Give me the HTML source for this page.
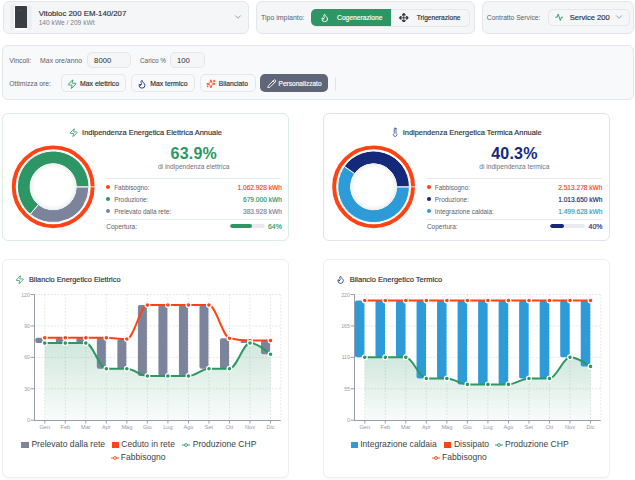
<!DOCTYPE html><html><head><meta charset="utf-8"><style>
*{box-sizing:border-box;margin:0;padding:0}
html,body{width:635px;height:480px;overflow:hidden;background:#fff;font-family:"Liberation Sans",sans-serif;color:#2b2f36}
.abs{position:absolute}
.card{position:absolute;border:1px solid #e4e6eb;border-radius:6px;background:#f5f6f8}
.ind{top:113px;width:286px;height:127px;background:#fff;border-radius:6px}
.chart{top:260px;width:286px;height:217px;background:#fff;border-color:#eef0f2}
.ind-title{position:absolute;top:128px;height:9px;font-size:6.9px;font-weight:bold;line-height:9px;white-space:nowrap;display:flex;align-items:center;gap:5px}
.pct{position:absolute;top:143px;width:80px;text-align:center;font-size:16.3px;font-weight:bold;line-height:20px}
.sub{position:absolute;top:162px;width:100px;text-align:center;font-size:6.65px;line-height:8px;color:#6b7280;white-space:nowrap}
.sep{position:absolute;width:175px;height:1px}
.dot{position:absolute;width:4.5px;height:4.5px;border-radius:50%}
.rl{position:absolute;font-size:6.4px;line-height:10px;color:#555b66;white-space:nowrap}
.rv{position:absolute;width:100px;text-align:right;font-size:6.5px;line-height:10px;white-space:nowrap;font-weight:bold}
.pbar{position:absolute;top:224.2px;width:35px;height:4.2px;border-radius:3px;background:#e8eaee;overflow:hidden}
.pbar div{height:100%;border-radius:3px}
.pv{position:absolute;top:221.5px;width:40px;text-align:right;font-size:6.9px;font-weight:bold;line-height:10px}
.lbl{position:absolute;font-size:6.85px;line-height:10px;color:#555b66;white-space:nowrap}
.btn{position:absolute;top:74px;height:18px;border:1px solid #e4e6eb;border-radius:5px;background:#f8f9fb;display:flex;align-items:center;font-size:6.3px;font-weight:bold;white-space:nowrap;color:#2b2f36}
.btn svg{position:absolute}
.inp{position:absolute;top:52px;height:16px;border:1px solid #e4e6eb;border-radius:5px;background:#f5f6f8;font-size:7.7px;line-height:14px;padding-left:6.5px;color:#2b2f36}
.leg{position:absolute;font-size:8.55px;line-height:11px;color:#3d424a;white-space:nowrap}
.sq{position:absolute;width:7.5px;height:5.5px}
svg{display:block}
.sb{font-weight:normal !important;-webkit-text-stroke-width:0.15px}
text{font-family:"Liberation Sans",sans-serif}
</style></head><body>
<div class="card" style="left:3px;top:1px;width:246px;height:33px"></div>
<div class="abs" style="left:10px;top:5px;width:22px;height:25px;background:#eceef1;border-radius:2px"></div>
<div class="abs" style="left:14.3px;top:4.7px;width:13px;height:25px;background:#fff"></div>
<div class="abs" style="left:14.9px;top:6.1px;width:12.1px;height:21.9px;background:#3a3d42;border-radius:0.5px"></div>
<div class="abs" style="left:18px;top:9.5px;width:5px;height:1.2px;background:#45484d"></div>
<div class="abs sb" style="left:38.70px;top:8px;font-size:7.82px;line-height:12px;color:#2b2f36;white-space:nowrap;">Vitobloc 200 EM-140/207</div>
<div class="abs" style="left:38.70px;top:17px;font-size:6.64px;line-height:12px;color:#7a808a;white-space:nowrap;">140 kWe / 209 kWt</div>
<div class="abs" style="left:232.5px;top:12.35px"><svg width="10" height="10" viewBox="0 0 24 24" fill="none" stroke="#7d828b" stroke-width="1.8" stroke-linecap="round" stroke-linejoin="round"><path d="m6 9 6 6 6-6"/></svg></div>
<div class="card" style="left:256px;top:1px;width:219px;height:33px"></div>
<div class="abs" style="left:261.00px;top:12px;font-size:6.97px;line-height:12px;color:#5a606b;white-space:nowrap;">Tipo impianto:</div>
<div class="abs" style="left:311px;top:8.5px;width:159px;height:18px;border:1px solid #e4e6eb;border-radius:5px;background:#f5f6f8"></div>
<div class="abs" style="left:311px;top:9px;width:80px;height:17px;border-radius:5px 0 0 5px;background:#2e9565"></div>
<div class="abs" style="left:319.9px;top:13.0px"><svg width="9.5" height="9.5" viewBox="0 0 24 24" fill="none" stroke="#fff" stroke-width="2.4" stroke-linecap="round" stroke-linejoin="round"><path d="M8.5 14.5A2.5 2.5 0 0 0 11 12c0-1.38-.5-2-1-3-1.072-2.143-.224-4.054 2-6 .5 2.5 2 4.9 4 6.5 2 1.6 3 3.5 3 5.5a7 7 0 1 1-14 0c0-1.153.433-2.294 1-3a2.5 2.5 0 0 0 2.5 2.5z"/></svg></div>
<div class="abs sb" style="left:337.10px;top:12px;font-size:6.68px;line-height:12px;color:#fff;white-space:nowrap;">Cogenerazione</div>
<div class="abs" style="left:399.4px;top:12.5px"><svg width="9.6" height="9.6" viewBox="0 0 24 24" fill="none" stroke="#2b2f36" stroke-width="2.2" stroke-linecap="round" stroke-linejoin="round"><path d="M12 2v20M2 12h20"/><path d="M15 19l-3 3-3-3M19 9l3 3-3 3M5 9l-3 3 3 3M9 5l3-3 3 3" stroke-width="3.4"/></svg></div>
<div class="abs sb" style="left:416.70px;top:12px;font-size:6.62px;line-height:12px;color:#2b2f36;white-space:nowrap;">Trigenerazione</div>
<div class="card" style="left:482px;top:1px;width:152px;height:33px"></div>
<div class="abs" style="left:486.80px;top:12px;font-size:6.7px;line-height:12px;color:#5a606b;white-space:nowrap;">Contratto Service:</div>
<div class="abs" style="left:548px;top:9px;width:82px;height:17px;border:1px solid #e4e6eb;border-radius:5px;background:#f5f6f8"></div>
<div class="abs" style="left:554.7px;top:12.7px"><svg width="8.5" height="8.5" viewBox="0 0 24 24" fill="none" stroke="#2e9565" stroke-width="2.6" stroke-linecap="round" stroke-linejoin="round"><path d="M22 12h-4l-3 9L9 3l-3 9H2"/></svg></div>
<div class="abs sb" style="left:569.80px;top:12px;font-size:7.57px;line-height:12px;color:#2b2f36;white-space:nowrap;">Service 200</div>
<div class="abs" style="left:613.75px;top:11.85px"><svg width="10" height="10" viewBox="0 0 24 24" fill="none" stroke="#7d828b" stroke-width="1.8" stroke-linecap="round" stroke-linejoin="round"><path d="m6 9 6 6 6-6"/></svg></div>
<div class="card" style="left:2px;top:45px;width:632px;height:55px;background:#f8f9fb"></div>
<div class="abs" style="left:9.25px;top:55px;font-size:6.86px;line-height:12px;color:#5a606b;white-space:nowrap;">Vincoli:</div>
<div class="abs" style="left:40.10px;top:55px;font-size:6.88px;line-height:12px;color:#5a606b;white-space:nowrap;">Max ore/anno</div>
<div class="abs" style="left:87px;top:52px;width:44px;height:16px;border:1px solid #e4e6eb;border-radius:5px;background:#f5f6f8"></div>
<div class="abs" style="left:94.10px;top:55px;font-size:7.73px;line-height:12px;color:#2b2f36;white-space:nowrap;">8000</div>
<div class="abs" style="left:140.00px;top:55px;font-size:6.4px;line-height:12px;color:#5a606b;white-space:nowrap;">Carico %</div>
<div class="abs" style="left:170px;top:52px;width:35px;height:16px;border:1px solid #e4e6eb;border-radius:5px;background:#f5f6f8"></div>
<div class="abs" style="left:176.90px;top:55px;font-size:7.73px;line-height:12px;color:#2b2f36;white-space:nowrap;">100</div>
<div class="abs" style="left:9.25px;top:78px;font-size:6.77px;line-height:12px;color:#5a606b;white-space:nowrap;">Ottimizza ore:</div>
<div class="abs" style="left:60.5px;top:74.3px;width:65px;height:17.7px;border:1px solid #e4e6eb;border-radius:5px;background:#f8f9fb"></div>
<div class="abs" style="left:66.6px;top:78.5px"><svg width="10.3" height="10.3" viewBox="0 0 24 24" fill="none" stroke="#2e9565" stroke-width="2.1" stroke-linecap="round" stroke-linejoin="round"><path d="M4 14a1 1 0 0 1-.78-1.63l9.9-10.2a.5.5 0 0 1 .86.46l-1.92 6.02A1 1 0 0 0 13 10h7a1 1 0 0 1 .78 1.63l-9.9 10.2a.5.5 0 0 1-.86-.46l1.92-6.02A1 1 0 0 0 11 14z"/></svg></div>
<div class="abs sb" style="left:79.90px;top:78px;font-size:6.93px;line-height:12px;color:#2b2f36;white-space:nowrap;">Max elettrico</div>
<div class="abs" style="left:130.5px;top:74.3px;width:64px;height:17.7px;border:1px solid #e4e6eb;border-radius:5px;background:#f8f9fb"></div>
<div class="abs" style="left:137.0px;top:79.0px"><svg width="10.0" height="10.0" viewBox="0 0 24 24" fill="none" stroke="#15297a" stroke-width="2.1" stroke-linecap="round" stroke-linejoin="round"><path d="M8.5 14.5A2.5 2.5 0 0 0 11 12c0-1.38-.5-2-1-3-1.072-2.143-.224-4.054 2-6 .5 2.5 2 4.9 4 6.5 2 1.6 3 3.5 3 5.5a7 7 0 1 1-14 0c0-1.153.433-2.294 1-3a2.5 2.5 0 0 0 2.5 2.5z"/></svg></div>
<div class="abs sb" style="left:150.20px;top:78px;font-size:6.89px;line-height:12px;color:#2b2f36;white-space:nowrap;">Max termico</div>
<div class="abs" style="left:199.5px;top:74.3px;width:56px;height:17.7px;border:1px solid #e4e6eb;border-radius:5px;background:#f8f9fb"></div>
<div class="abs" style="left:206.0px;top:78.7px"><svg width="9.8" height="9.8" viewBox="0 0 24 24" fill="none" stroke="#ff4314" stroke-width="2.2" stroke-linecap="round" stroke-linejoin="round"><path d="M9.937 15.5A2 2 0 0 0 8.5 14.063l-6.135-1.582a.5.5 0 0 1 0-.962L8.5 9.936A2 2 0 0 0 9.937 8.5l1.582-6.135a.5.5 0 0 1 .963 0L14.063 8.5A2 2 0 0 0 15.5 9.937l6.135 1.581a.5.5 0 0 1 0 .964L15.5 14.063a2 2 0 0 0-1.437 1.437l-1.582 6.135a.5.5 0 0 1-.963 0z"/><path d="M20 3v4M22 5h-4M4 17v2M5 18H3"/></svg></div>
<div class="abs sb" style="left:218.80px;top:78px;font-size:6.71px;line-height:12px;color:#2b2f36;white-space:nowrap;">Bilanciato</div>
<div class="abs" style="left:260px;top:74.3px;width:68px;height:17.7px;border-radius:5px;background:#5f6677"></div>
<div class="abs" style="left:266.6px;top:78.9px"><svg width="9.6" height="9.6" viewBox="0 0 24 24" fill="none" stroke="#fff" stroke-width="2.3" stroke-linecap="round" stroke-linejoin="round"><path d="M21.174 6.812a1 1 0 0 0-3.986-3.987L3.842 16.174a2 2 0 0 0-.5.83l-1.321 4.352a.5.5 0 0 0 .623.622l4.353-1.32a2 2 0 0 0 .83-.497z"/><path d="m15 5 4 4"/></svg></div>
<div class="abs sb" style="left:278.60px;top:78px;font-size:6.55px;line-height:12px;color:#fff;white-space:nowrap;">Personalizzato</div>
<div class="abs" style="left:335px;top:76.5px;width:1px;height:14px;background:#e1e3e8"></div>
<svg width="0" height="0" style="position:absolute"><defs><radialGradient id="inner"><stop offset="0.8" stop-color="#fff"/><stop offset="1" stop-color="#eceef0"/></radialGradient></defs></svg>
<div class="card" style="left:2px;top:113px;width:287px;height:128px;background:#fff;border-color:#dbeee4"></div>
<div class="abs" style="left:69.3px;top:128.2px"><svg width="9.4" height="9.4" viewBox="0 0 24 24" fill="none" stroke="#2e9565" stroke-width="2.0" stroke-linecap="round" stroke-linejoin="round"><path d="M4 14a1 1 0 0 1-.78-1.63l9.9-10.2a.5.5 0 0 1 .86.46l-1.92 6.02A1 1 0 0 0 13 10h7a1 1 0 0 1 .78 1.63l-9.9 10.2a.5.5 0 0 1-.86-.46l1.92-6.02A1 1 0 0 0 11 14z"/></svg></div>
<div class="abs sb" style="left:82.10px;top:127px;font-size:7.43px;line-height:12px;color:#2b2f36;white-space:nowrap;">Indipendenza Energetica Elettrica Annuale</div>
<div class="abs" style="left:143.80px;width:100px;text-align:center;top:148px;font-size:16px;line-height:12px;color:#2e9565;white-space:nowrap;font-weight:bold;letter-spacing:0.2px">63.9%</div>
<div class="abs" style="left:133.70px;width:120px;text-align:center;top:161px;font-size:6.65px;line-height:12px;color:#6b7280;white-space:nowrap;">di indipendenza elettrica</div>
<div class="abs" style="left:106px;top:177.5px;width:175px;height:1px;background:#e3efe9"></div>
<div class="abs" style="left:106.3px;top:185.2px;width:4px;height:4px;border-radius:50%;background:#ff4314"></div>
<div class="abs" style="left:114.20px;top:182px;font-size:6.4px;line-height:12px;color:#5a606b;white-space:nowrap;">Fabbisogno:</div>
<div class="abs sb" style="left:181.90px;width:100px;text-align:right;top:182px;font-size:6.6px;line-height:12px;color:#ff4314;white-space:nowrap;">1.062.928 kWh</div>
<div class="abs" style="left:106.3px;top:197.4px;width:4px;height:4px;border-radius:50%;background:#2e9565"></div>
<div class="abs" style="left:114.20px;top:194px;font-size:6.4px;line-height:12px;color:#5a606b;white-space:nowrap;">Produzione:</div>
<div class="abs sb" style="left:181.90px;width:100px;text-align:right;top:194px;font-size:6.6px;line-height:12px;color:#2e9565;white-space:nowrap;">679.000 kWh</div>
<div class="abs" style="left:106.3px;top:209.4px;width:4px;height:4px;border-radius:50%;background:#7b849b"></div>
<div class="abs" style="left:114.20px;top:206px;font-size:6.4px;line-height:12px;color:#5a606b;white-space:nowrap;">Prelevato dalla rete:</div>
<div class="abs sb" style="left:181.90px;width:100px;text-align:right;top:206px;font-size:6.6px;line-height:12px;color:#7b849b;white-space:nowrap;">383.928 kWh</div>
<div class="abs" style="left:106px;top:218.8px;width:175px;height:1px;background:#e3efe9"></div>
<div class="abs" style="left:106.30px;top:221px;font-size:6.5px;line-height:12px;color:#5a606b;white-space:nowrap;">Copertura:</div>
<div class="abs" style="left:229.5px;top:224.2px;width:35px;height:4.2px;border-radius:3px;background:#e8eaee;overflow:hidden"><div style="width:64%;height:100%;border-radius:3px;background:#2e9565"></div></div>
<div class="abs sb" style="left:241.90px;width:40px;text-align:right;top:221px;font-size:6.94px;line-height:12px;color:#2e9565;white-space:nowrap;">64%</div>
<svg width="635" height="480" style="position:absolute;left:0;top:0" viewBox="0 0 635 480">
<circle cx="53.20" cy="186.80" r="39.45" fill="none" stroke="#ff4314" stroke-width="3.9"/>
<line x1="89.20" y1="186.80" x2="95.20" y2="186.80" stroke="#fff" stroke-width="0.8"/>
<path d="M89.00,186.80 A35.80,35.80 0 0 1 30.21,214.24 L38.43,204.43 A23.00,23.00 0 0 0 76.20,186.80 Z" fill="#7b849b" stroke="#fff" stroke-width="1"/>
<path d="M30.21,214.24 A35.80,35.80 0 1 1 89.00,186.80 L76.20,186.80 A23.00,23.00 0 1 0 38.43,204.43 Z" fill="#2e9565" stroke="#fff" stroke-width="1"/>
<circle cx="53.20" cy="186.80" r="23.2" fill="url(#inner)"/>
</svg>
<div class="card" style="left:322.6px;top:113px;width:287px;height:128px;background:#fff;border-color:#dfe3f0"></div>
<div class="abs" style="left:389.7px;top:127.1px"><svg width="10.3" height="10.3" viewBox="0 0 24 24" fill="none" stroke="#24378a" stroke-width="1.7" stroke-linecap="round" stroke-linejoin="round"><path d="M14 4v10.54a4 4 0 1 1-4 0V4a2 2 0 0 1 4 0Z"/></svg></div>
<div class="abs sb" style="left:402.70px;top:127px;font-size:7.43px;line-height:12px;color:#2b2f36;white-space:nowrap;">Indipendenza Energetica Termica Annuale</div>
<div class="abs" style="left:464.40px;width:100px;text-align:center;top:148px;font-size:16px;line-height:12px;color:#15297a;white-space:nowrap;font-weight:bold;letter-spacing:0.2px">40.3%</div>
<div class="abs" style="left:454.30px;width:120px;text-align:center;top:161px;font-size:6.65px;line-height:12px;color:#6b7280;white-space:nowrap;">di indipendenza termica</div>
<div class="abs" style="left:426.6px;top:177.5px;width:175px;height:1px;background:#e6e8f0"></div>
<div class="abs" style="left:426.9px;top:185.2px;width:4px;height:4px;border-radius:50%;background:#ff4314"></div>
<div class="abs" style="left:434.80px;top:182px;font-size:6.4px;line-height:12px;color:#5a606b;white-space:nowrap;">Fabbisogno:</div>
<div class="abs sb" style="left:502.50px;width:100px;text-align:right;top:182px;font-size:6.6px;line-height:12px;color:#ff4314;white-space:nowrap;">2.513.278 kWh</div>
<div class="abs" style="left:426.9px;top:197.4px;width:4px;height:4px;border-radius:50%;background:#15297a"></div>
<div class="abs" style="left:434.80px;top:194px;font-size:6.4px;line-height:12px;color:#5a606b;white-space:nowrap;">Produzione:</div>
<div class="abs sb" style="left:502.50px;width:100px;text-align:right;top:194px;font-size:6.6px;line-height:12px;color:#15297a;white-space:nowrap;">1.013.650 kWh</div>
<div class="abs" style="left:426.9px;top:209.4px;width:4px;height:4px;border-radius:50%;background:#2d9bd8"></div>
<div class="abs" style="left:434.80px;top:206px;font-size:6.4px;line-height:12px;color:#5a606b;white-space:nowrap;">Integrazione caldaia:</div>
<div class="abs sb" style="left:502.50px;width:100px;text-align:right;top:206px;font-size:6.6px;line-height:12px;color:#2d9bd8;white-space:nowrap;">1.499.628 kWh</div>
<div class="abs" style="left:426.6px;top:218.8px;width:175px;height:1px;background:#e6e8f0"></div>
<div class="abs" style="left:426.90px;top:221px;font-size:6.5px;line-height:12px;color:#5a606b;white-space:nowrap;">Copertura:</div>
<div class="abs" style="left:550.1px;top:224.2px;width:35px;height:4.2px;border-radius:3px;background:#e8eaee;overflow:hidden"><div style="width:40%;height:100%;border-radius:3px;background:#15297a"></div></div>
<div class="abs sb" style="left:562.50px;width:40px;text-align:right;top:221px;font-size:6.94px;line-height:12px;color:#15297a;white-space:nowrap;">40%</div>
<svg width="635" height="480" style="position:absolute;left:0;top:0" viewBox="0 0 635 480">
<circle cx="373.60" cy="186.80" r="39.45" fill="none" stroke="#ff4314" stroke-width="3.9"/>
<line x1="409.60" y1="186.80" x2="415.60" y2="186.80" stroke="#fff" stroke-width="0.8"/>
<path d="M409.40,186.80 A35.80,35.80 0 1 1 344.25,166.31 L354.74,173.63 A23.00,23.00 0 1 0 396.60,186.80 Z" fill="#2d9bd8" stroke="#fff" stroke-width="1"/>
<path d="M344.25,166.31 A35.80,35.80 0 0 1 409.40,186.80 L396.60,186.80 A23.00,23.00 0 0 0 354.74,173.63 Z" fill="#15297a" stroke="#fff" stroke-width="1"/>
<circle cx="373.60" cy="186.80" r="23.2" fill="url(#inner)"/>
</svg>
<div class="card" style="left:2px;top:259px;width:287px;height:219px;background:#fff;border-color:#eceef1;box-shadow:0 0.5px 1px rgba(0,0,0,0.03)"></div>
<div class="card" style="left:323px;top:259px;width:287px;height:219px;background:#fff;border-color:#eceef1;box-shadow:0 0.5px 1px rgba(0,0,0,0.03)"></div>
<div class="abs" style="left:15.2px;top:274.7px"><svg width="9.5" height="9.5" viewBox="0 0 24 24" fill="none" stroke="#2e9565" stroke-width="2.0" stroke-linecap="round" stroke-linejoin="round"><path d="M4 14a1 1 0 0 1-.78-1.63l9.9-10.2a.5.5 0 0 1 .86.46l-1.92 6.02A1 1 0 0 0 13 10h7a1 1 0 0 1 .78 1.63l-9.9 10.2a.5.5 0 0 1-.86-.46l1.92-6.02A1 1 0 0 0 11 14z"/></svg></div>
<div class="abs sb" style="left:28.90px;top:274px;font-size:7.36px;line-height:12px;color:#2b2f36;white-space:nowrap;">Bilancio Energetico Elettrico</div>
<div class="abs" style="left:336.0px;top:275.0px"><svg width="9.2" height="9.2" viewBox="0 0 24 24" fill="none" stroke="#15297a" stroke-width="2.1" stroke-linecap="round" stroke-linejoin="round"><path d="M8.5 14.5A2.5 2.5 0 0 0 11 12c0-1.38-.5-2-1-3-1.072-2.143-.224-4.054 2-6 .5 2.5 2 4.9 4 6.5 2 1.6 3 3.5 3 5.5a7 7 0 1 1-14 0c0-1.153.433-2.294 1-3a2.5 2.5 0 0 0 2.5 2.5z"/></svg></div>
<div class="abs sb" style="left:349.70px;top:274px;font-size:7.5px;line-height:12px;color:#2b2f36;white-space:nowrap;">Bilancio Energetico Termico</div>
<svg width="635" height="480" style="position:absolute;left:0px;top:0" viewBox="0 0 635 480">
<defs><linearGradient id="ag0" x1="0" y1="0" x2="0" y2="1"><stop offset="0" stop-color="#2e9565" stop-opacity="0.22"/><stop offset="1" stop-color="#2e9565" stop-opacity="0.03"/></linearGradient></defs>
<line x1="34.50" y1="388.77" x2="280.80" y2="388.77" stroke="#dfe2e8" stroke-width="0.9" stroke-dasharray="1.6 1.7"/>
<line x1="34.50" y1="357.35" x2="280.80" y2="357.35" stroke="#dfe2e8" stroke-width="0.9" stroke-dasharray="1.6 1.7"/>
<line x1="34.50" y1="325.93" x2="280.80" y2="325.93" stroke="#dfe2e8" stroke-width="0.9" stroke-dasharray="1.6 1.7"/>
<line x1="34.50" y1="294.50" x2="280.80" y2="294.50" stroke="#dfe2e8" stroke-width="0.9" stroke-dasharray="1.6 1.7"/>
<line x1="44.76" y1="294.50" x2="44.76" y2="420.20" stroke="#dfe2e8" stroke-width="0.9" stroke-dasharray="1.6 1.7"/>
<line x1="65.29" y1="294.50" x2="65.29" y2="420.20" stroke="#dfe2e8" stroke-width="0.9" stroke-dasharray="1.6 1.7"/>
<line x1="85.81" y1="294.50" x2="85.81" y2="420.20" stroke="#dfe2e8" stroke-width="0.9" stroke-dasharray="1.6 1.7"/>
<line x1="106.34" y1="294.50" x2="106.34" y2="420.20" stroke="#dfe2e8" stroke-width="0.9" stroke-dasharray="1.6 1.7"/>
<line x1="126.86" y1="294.50" x2="126.86" y2="420.20" stroke="#dfe2e8" stroke-width="0.9" stroke-dasharray="1.6 1.7"/>
<line x1="147.39" y1="294.50" x2="147.39" y2="420.20" stroke="#dfe2e8" stroke-width="0.9" stroke-dasharray="1.6 1.7"/>
<line x1="167.91" y1="294.50" x2="167.91" y2="420.20" stroke="#dfe2e8" stroke-width="0.9" stroke-dasharray="1.6 1.7"/>
<line x1="188.44" y1="294.50" x2="188.44" y2="420.20" stroke="#dfe2e8" stroke-width="0.9" stroke-dasharray="1.6 1.7"/>
<line x1="208.96" y1="294.50" x2="208.96" y2="420.20" stroke="#dfe2e8" stroke-width="0.9" stroke-dasharray="1.6 1.7"/>
<line x1="229.49" y1="294.50" x2="229.49" y2="420.20" stroke="#dfe2e8" stroke-width="0.9" stroke-dasharray="1.6 1.7"/>
<line x1="250.01" y1="294.50" x2="250.01" y2="420.20" stroke="#dfe2e8" stroke-width="0.9" stroke-dasharray="1.6 1.7"/>
<line x1="270.54" y1="294.50" x2="270.54" y2="420.20" stroke="#dfe2e8" stroke-width="0.9" stroke-dasharray="1.6 1.7"/>
<line x1="280.80" y1="294.50" x2="280.80" y2="420.20" stroke="#dfe2e8" stroke-width="0.9" stroke-dasharray="1.6 1.7"/>
<path d="M44.76,343.10 C51.60,343.10 58.45,343.10 65.29,343.10 C72.13,343.10 78.97,343.10 85.81,343.10 C92.65,343.10 99.50,368.77 106.34,368.77 C113.18,368.77 120.02,368.77 126.86,368.77 C133.70,368.77 140.55,376.00 147.39,376.00 C154.23,376.00 161.07,376.00 167.91,376.00 C174.75,376.00 181.60,376.00 188.44,376.00 C195.28,376.00 202.12,368.77 208.96,368.77 C215.80,368.77 222.65,368.77 229.49,368.77 C236.33,368.77 243.17,343.10 250.01,343.10 C256.85,343.10 263.70,348.66 270.54,354.21 L270.54,420.20 L44.76,420.20 Z" fill="url(#ag0)"/>
<line x1="34.50" y1="294.50" x2="34.50" y2="421.00" stroke="#999da5" stroke-width="1"/>
<line x1="34.00" y1="420.50" x2="280.80" y2="420.50" stroke="#999da5" stroke-width="1"/>
<rect x="35.26" y="337.87" width="9.00" height="5.24" rx="2.00" fill="#7b849b"/>
<rect x="55.79" y="337.87" width="9.00" height="5.24" rx="2.00" fill="#7b849b"/>
<rect x="76.31" y="337.87" width="9.00" height="5.24" rx="2.00" fill="#7b849b"/>
<rect x="96.84" y="337.87" width="9.00" height="30.90" rx="2.00" fill="#7b849b"/>
<rect x="117.36" y="339.02" width="9.00" height="29.75" rx="2.00" fill="#7b849b"/>
<rect x="137.89" y="304.98" width="9.00" height="71.02" rx="2.00" fill="#7b849b"/>
<rect x="158.41" y="304.98" width="9.00" height="71.02" rx="2.00" fill="#7b849b"/>
<rect x="178.94" y="304.98" width="9.00" height="71.02" rx="2.00" fill="#7b849b"/>
<rect x="199.46" y="304.98" width="9.00" height="63.79" rx="2.00" fill="#7b849b"/>
<rect x="219.99" y="338.29" width="9.00" height="30.48" rx="2.00" fill="#7b849b"/>
<rect x="240.51" y="340.59" width="9.00" height="2.51" rx="1.26" fill="#7b849b"/>
<rect x="261.04" y="340.59" width="9.00" height="13.62" rx="2.00" fill="#7b849b"/>
<line x1="30.50" y1="420.20" x2="34.50" y2="420.20" stroke="#999da5" stroke-width="1"/>
<text x="29.70" y="420.20" font-size="5.0" fill="#959aa2" text-anchor="end" dominant-baseline="central">0</text>
<line x1="30.50" y1="388.77" x2="34.50" y2="388.77" stroke="#999da5" stroke-width="1"/>
<text x="29.70" y="388.77" font-size="5.0" fill="#959aa2" text-anchor="end" dominant-baseline="central">30</text>
<line x1="30.50" y1="357.35" x2="34.50" y2="357.35" stroke="#999da5" stroke-width="1"/>
<text x="29.70" y="357.35" font-size="5.0" fill="#959aa2" text-anchor="end" dominant-baseline="central">60</text>
<line x1="30.50" y1="325.93" x2="34.50" y2="325.93" stroke="#999da5" stroke-width="1"/>
<text x="29.70" y="325.93" font-size="5.0" fill="#959aa2" text-anchor="end" dominant-baseline="central">90</text>
<line x1="30.50" y1="294.50" x2="34.50" y2="294.50" stroke="#999da5" stroke-width="1"/>
<text x="29.70" y="294.50" font-size="5.0" fill="#959aa2" text-anchor="end" dominant-baseline="central">120</text>
<line x1="44.76" y1="420.50" x2="44.76" y2="423.50" stroke="#999da5" stroke-width="1"/>
<text x="44.76" y="426.90" font-size="5.6" fill="#959aa2" text-anchor="middle" dominant-baseline="central">Gen</text>
<line x1="65.29" y1="420.50" x2="65.29" y2="423.50" stroke="#999da5" stroke-width="1"/>
<text x="65.29" y="426.90" font-size="5.6" fill="#959aa2" text-anchor="middle" dominant-baseline="central">Feb</text>
<line x1="85.81" y1="420.50" x2="85.81" y2="423.50" stroke="#999da5" stroke-width="1"/>
<text x="85.81" y="426.90" font-size="5.6" fill="#959aa2" text-anchor="middle" dominant-baseline="central">Mar</text>
<line x1="106.34" y1="420.50" x2="106.34" y2="423.50" stroke="#999da5" stroke-width="1"/>
<text x="106.34" y="426.90" font-size="5.6" fill="#959aa2" text-anchor="middle" dominant-baseline="central">Apr</text>
<line x1="126.86" y1="420.50" x2="126.86" y2="423.50" stroke="#999da5" stroke-width="1"/>
<text x="126.86" y="426.90" font-size="5.6" fill="#959aa2" text-anchor="middle" dominant-baseline="central">Mag</text>
<line x1="147.39" y1="420.50" x2="147.39" y2="423.50" stroke="#999da5" stroke-width="1"/>
<text x="147.39" y="426.90" font-size="5.6" fill="#959aa2" text-anchor="middle" dominant-baseline="central">Giu</text>
<line x1="167.91" y1="420.50" x2="167.91" y2="423.50" stroke="#999da5" stroke-width="1"/>
<text x="167.91" y="426.90" font-size="5.6" fill="#959aa2" text-anchor="middle" dominant-baseline="central">Lug</text>
<line x1="188.44" y1="420.50" x2="188.44" y2="423.50" stroke="#999da5" stroke-width="1"/>
<text x="188.44" y="426.90" font-size="5.6" fill="#959aa2" text-anchor="middle" dominant-baseline="central">Ago</text>
<line x1="208.96" y1="420.50" x2="208.96" y2="423.50" stroke="#999da5" stroke-width="1"/>
<text x="208.96" y="426.90" font-size="5.6" fill="#959aa2" text-anchor="middle" dominant-baseline="central">Set</text>
<line x1="229.49" y1="420.50" x2="229.49" y2="423.50" stroke="#999da5" stroke-width="1"/>
<text x="229.49" y="426.90" font-size="5.6" fill="#959aa2" text-anchor="middle" dominant-baseline="central">Ott</text>
<line x1="250.01" y1="420.50" x2="250.01" y2="423.50" stroke="#999da5" stroke-width="1"/>
<text x="250.01" y="426.90" font-size="5.6" fill="#959aa2" text-anchor="middle" dominant-baseline="central">Nov</text>
<line x1="270.54" y1="420.50" x2="270.54" y2="423.50" stroke="#999da5" stroke-width="1"/>
<text x="270.54" y="426.90" font-size="5.6" fill="#959aa2" text-anchor="middle" dominant-baseline="central">Dic</text>
<path d="M44.76,337.87 C51.60,337.87 58.45,337.87 65.29,337.87 C72.13,337.87 78.97,337.87 85.81,337.87 C92.65,337.87 99.50,337.87 106.34,337.87 C113.18,337.87 120.02,339.02 126.86,339.02 C133.70,339.02 140.55,304.98 147.39,304.98 C154.23,304.98 161.07,304.98 167.91,304.98 C174.75,304.98 181.60,304.98 188.44,304.98 C195.28,304.98 202.12,304.98 208.96,304.98 C215.80,304.98 222.65,336.75 229.49,338.29 C236.33,339.82 243.17,340.59 250.01,340.59 C256.85,340.59 263.70,340.59 270.54,340.59" fill="none" stroke="#ff4314" stroke-width="2"/>
<path d="M44.76,343.10 C51.60,343.10 58.45,343.10 65.29,343.10 C72.13,343.10 78.97,343.10 85.81,343.10 C92.65,343.10 99.50,368.77 106.34,368.77 C113.18,368.77 120.02,368.77 126.86,368.77 C133.70,368.77 140.55,376.00 147.39,376.00 C154.23,376.00 161.07,376.00 167.91,376.00 C174.75,376.00 181.60,376.00 188.44,376.00 C195.28,376.00 202.12,368.77 208.96,368.77 C215.80,368.77 222.65,368.77 229.49,368.77 C236.33,368.77 243.17,343.10 250.01,343.10 C256.85,343.10 263.70,348.66 270.54,354.21" fill="none" stroke="#2e9565" stroke-width="2"/>
<circle cx="44.76" cy="337.87" r="2.4" fill="#ff4314" stroke="#fff" stroke-width="1.2"/>
<circle cx="65.29" cy="337.87" r="2.4" fill="#ff4314" stroke="#fff" stroke-width="1.2"/>
<circle cx="85.81" cy="337.87" r="2.4" fill="#ff4314" stroke="#fff" stroke-width="1.2"/>
<circle cx="106.34" cy="337.87" r="2.4" fill="#ff4314" stroke="#fff" stroke-width="1.2"/>
<circle cx="126.86" cy="339.02" r="2.4" fill="#ff4314" stroke="#fff" stroke-width="1.2"/>
<circle cx="147.39" cy="304.98" r="2.4" fill="#ff4314" stroke="#fff" stroke-width="1.2"/>
<circle cx="167.91" cy="304.98" r="2.4" fill="#ff4314" stroke="#fff" stroke-width="1.2"/>
<circle cx="188.44" cy="304.98" r="2.4" fill="#ff4314" stroke="#fff" stroke-width="1.2"/>
<circle cx="208.96" cy="304.98" r="2.4" fill="#ff4314" stroke="#fff" stroke-width="1.2"/>
<circle cx="229.49" cy="338.29" r="2.4" fill="#ff4314" stroke="#fff" stroke-width="1.2"/>
<circle cx="250.01" cy="340.59" r="2.4" fill="#ff4314" stroke="#fff" stroke-width="1.2"/>
<circle cx="270.54" cy="340.59" r="2.4" fill="#ff4314" stroke="#fff" stroke-width="1.2"/>
<circle cx="44.76" cy="343.10" r="2.4" fill="#2e9565" stroke="#fff" stroke-width="1.2"/>
<circle cx="65.29" cy="343.10" r="2.4" fill="#2e9565" stroke="#fff" stroke-width="1.2"/>
<circle cx="85.81" cy="343.10" r="2.4" fill="#2e9565" stroke="#fff" stroke-width="1.2"/>
<circle cx="106.34" cy="368.77" r="2.4" fill="#2e9565" stroke="#fff" stroke-width="1.2"/>
<circle cx="126.86" cy="368.77" r="2.4" fill="#2e9565" stroke="#fff" stroke-width="1.2"/>
<circle cx="147.39" cy="376.00" r="2.4" fill="#2e9565" stroke="#fff" stroke-width="1.2"/>
<circle cx="167.91" cy="376.00" r="2.4" fill="#2e9565" stroke="#fff" stroke-width="1.2"/>
<circle cx="188.44" cy="376.00" r="2.4" fill="#2e9565" stroke="#fff" stroke-width="1.2"/>
<circle cx="208.96" cy="368.77" r="2.4" fill="#2e9565" stroke="#fff" stroke-width="1.2"/>
<circle cx="229.49" cy="368.77" r="2.4" fill="#2e9565" stroke="#fff" stroke-width="1.2"/>
<circle cx="250.01" cy="343.10" r="2.4" fill="#2e9565" stroke="#fff" stroke-width="1.2"/>
<circle cx="270.54" cy="354.21" r="2.4" fill="#2e9565" stroke="#fff" stroke-width="1.2"/>
</svg>
<svg width="635" height="480" style="position:absolute;left:320.4px;top:0" viewBox="0 0 635 480">
<defs><linearGradient id="ag320" x1="0" y1="0" x2="0" y2="1"><stop offset="0" stop-color="#2e9565" stop-opacity="0.22"/><stop offset="1" stop-color="#2e9565" stop-opacity="0.03"/></linearGradient></defs>
<line x1="34.50" y1="388.77" x2="280.80" y2="388.77" stroke="#dfe2e8" stroke-width="0.9" stroke-dasharray="1.6 1.7"/>
<line x1="34.50" y1="357.35" x2="280.80" y2="357.35" stroke="#dfe2e8" stroke-width="0.9" stroke-dasharray="1.6 1.7"/>
<line x1="34.50" y1="325.93" x2="280.80" y2="325.93" stroke="#dfe2e8" stroke-width="0.9" stroke-dasharray="1.6 1.7"/>
<line x1="34.50" y1="294.50" x2="280.80" y2="294.50" stroke="#dfe2e8" stroke-width="0.9" stroke-dasharray="1.6 1.7"/>
<line x1="44.76" y1="294.50" x2="44.76" y2="420.20" stroke="#dfe2e8" stroke-width="0.9" stroke-dasharray="1.6 1.7"/>
<line x1="65.29" y1="294.50" x2="65.29" y2="420.20" stroke="#dfe2e8" stroke-width="0.9" stroke-dasharray="1.6 1.7"/>
<line x1="85.81" y1="294.50" x2="85.81" y2="420.20" stroke="#dfe2e8" stroke-width="0.9" stroke-dasharray="1.6 1.7"/>
<line x1="106.34" y1="294.50" x2="106.34" y2="420.20" stroke="#dfe2e8" stroke-width="0.9" stroke-dasharray="1.6 1.7"/>
<line x1="126.86" y1="294.50" x2="126.86" y2="420.20" stroke="#dfe2e8" stroke-width="0.9" stroke-dasharray="1.6 1.7"/>
<line x1="147.39" y1="294.50" x2="147.39" y2="420.20" stroke="#dfe2e8" stroke-width="0.9" stroke-dasharray="1.6 1.7"/>
<line x1="167.91" y1="294.50" x2="167.91" y2="420.20" stroke="#dfe2e8" stroke-width="0.9" stroke-dasharray="1.6 1.7"/>
<line x1="188.44" y1="294.50" x2="188.44" y2="420.20" stroke="#dfe2e8" stroke-width="0.9" stroke-dasharray="1.6 1.7"/>
<line x1="208.96" y1="294.50" x2="208.96" y2="420.20" stroke="#dfe2e8" stroke-width="0.9" stroke-dasharray="1.6 1.7"/>
<line x1="229.49" y1="294.50" x2="229.49" y2="420.20" stroke="#dfe2e8" stroke-width="0.9" stroke-dasharray="1.6 1.7"/>
<line x1="250.01" y1="294.50" x2="250.01" y2="420.20" stroke="#dfe2e8" stroke-width="0.9" stroke-dasharray="1.6 1.7"/>
<line x1="270.54" y1="294.50" x2="270.54" y2="420.20" stroke="#dfe2e8" stroke-width="0.9" stroke-dasharray="1.6 1.7"/>
<line x1="280.80" y1="294.50" x2="280.80" y2="420.20" stroke="#dfe2e8" stroke-width="0.9" stroke-dasharray="1.6 1.7"/>
<path d="M44.76,357.35 C51.60,357.35 58.45,357.35 65.29,357.35 C72.13,357.35 78.97,357.35 85.81,357.35 C92.65,357.35 99.50,378.49 106.34,378.49 C113.18,378.49 120.02,378.49 126.86,378.49 C133.70,378.49 140.55,384.38 147.39,384.38 C154.23,384.38 161.07,384.38 167.91,384.38 C174.75,384.38 181.60,384.38 188.44,384.38 C195.28,384.38 202.12,378.49 208.96,378.49 C215.80,378.49 222.65,378.49 229.49,378.49 C236.33,378.49 243.17,357.35 250.01,357.35 C256.85,357.35 263.70,361.86 270.54,366.38 L270.54,420.20 L44.76,420.20 Z" fill="url(#ag320)"/>
<line x1="34.50" y1="294.50" x2="34.50" y2="421.00" stroke="#999da5" stroke-width="1"/>
<line x1="34.00" y1="420.50" x2="280.80" y2="420.50" stroke="#999da5" stroke-width="1"/>
<rect x="34.96" y="300.56" width="9.50" height="56.79" rx="2.00" fill="#2d9bd8"/>
<rect x="55.49" y="300.56" width="9.50" height="56.79" rx="2.00" fill="#2d9bd8"/>
<rect x="76.01" y="300.56" width="9.50" height="56.79" rx="2.00" fill="#2d9bd8"/>
<rect x="96.54" y="300.56" width="9.50" height="77.93" rx="2.00" fill="#2d9bd8"/>
<rect x="117.06" y="300.56" width="9.50" height="77.93" rx="2.00" fill="#2d9bd8"/>
<rect x="137.59" y="300.56" width="9.50" height="83.82" rx="2.00" fill="#2d9bd8"/>
<rect x="158.11" y="300.56" width="9.50" height="83.82" rx="2.00" fill="#2d9bd8"/>
<rect x="178.64" y="300.56" width="9.50" height="83.82" rx="2.00" fill="#2d9bd8"/>
<rect x="199.16" y="300.56" width="9.50" height="77.93" rx="2.00" fill="#2d9bd8"/>
<rect x="219.69" y="300.56" width="9.50" height="77.93" rx="2.00" fill="#2d9bd8"/>
<rect x="240.21" y="300.56" width="9.50" height="56.79" rx="2.00" fill="#2d9bd8"/>
<rect x="260.74" y="300.56" width="9.50" height="65.82" rx="2.00" fill="#2d9bd8"/>
<line x1="30.50" y1="420.20" x2="34.50" y2="420.20" stroke="#999da5" stroke-width="1"/>
<text x="29.70" y="420.20" font-size="5.0" fill="#959aa2" text-anchor="end" dominant-baseline="central">0</text>
<line x1="30.50" y1="388.77" x2="34.50" y2="388.77" stroke="#999da5" stroke-width="1"/>
<text x="29.70" y="388.77" font-size="5.0" fill="#959aa2" text-anchor="end" dominant-baseline="central">55</text>
<line x1="30.50" y1="357.35" x2="34.50" y2="357.35" stroke="#999da5" stroke-width="1"/>
<text x="29.70" y="357.35" font-size="5.0" fill="#959aa2" text-anchor="end" dominant-baseline="central">110</text>
<line x1="30.50" y1="325.93" x2="34.50" y2="325.93" stroke="#999da5" stroke-width="1"/>
<text x="29.70" y="325.93" font-size="5.0" fill="#959aa2" text-anchor="end" dominant-baseline="central">165</text>
<line x1="30.50" y1="294.50" x2="34.50" y2="294.50" stroke="#999da5" stroke-width="1"/>
<text x="29.70" y="294.50" font-size="5.0" fill="#959aa2" text-anchor="end" dominant-baseline="central">220</text>
<line x1="44.76" y1="420.50" x2="44.76" y2="423.50" stroke="#999da5" stroke-width="1"/>
<text x="44.76" y="426.90" font-size="5.6" fill="#959aa2" text-anchor="middle" dominant-baseline="central">Gen</text>
<line x1="65.29" y1="420.50" x2="65.29" y2="423.50" stroke="#999da5" stroke-width="1"/>
<text x="65.29" y="426.90" font-size="5.6" fill="#959aa2" text-anchor="middle" dominant-baseline="central">Feb</text>
<line x1="85.81" y1="420.50" x2="85.81" y2="423.50" stroke="#999da5" stroke-width="1"/>
<text x="85.81" y="426.90" font-size="5.6" fill="#959aa2" text-anchor="middle" dominant-baseline="central">Mar</text>
<line x1="106.34" y1="420.50" x2="106.34" y2="423.50" stroke="#999da5" stroke-width="1"/>
<text x="106.34" y="426.90" font-size="5.6" fill="#959aa2" text-anchor="middle" dominant-baseline="central">Apr</text>
<line x1="126.86" y1="420.50" x2="126.86" y2="423.50" stroke="#999da5" stroke-width="1"/>
<text x="126.86" y="426.90" font-size="5.6" fill="#959aa2" text-anchor="middle" dominant-baseline="central">Mag</text>
<line x1="147.39" y1="420.50" x2="147.39" y2="423.50" stroke="#999da5" stroke-width="1"/>
<text x="147.39" y="426.90" font-size="5.6" fill="#959aa2" text-anchor="middle" dominant-baseline="central">Giu</text>
<line x1="167.91" y1="420.50" x2="167.91" y2="423.50" stroke="#999da5" stroke-width="1"/>
<text x="167.91" y="426.90" font-size="5.6" fill="#959aa2" text-anchor="middle" dominant-baseline="central">Lug</text>
<line x1="188.44" y1="420.50" x2="188.44" y2="423.50" stroke="#999da5" stroke-width="1"/>
<text x="188.44" y="426.90" font-size="5.6" fill="#959aa2" text-anchor="middle" dominant-baseline="central">Ago</text>
<line x1="208.96" y1="420.50" x2="208.96" y2="423.50" stroke="#999da5" stroke-width="1"/>
<text x="208.96" y="426.90" font-size="5.6" fill="#959aa2" text-anchor="middle" dominant-baseline="central">Set</text>
<line x1="229.49" y1="420.50" x2="229.49" y2="423.50" stroke="#999da5" stroke-width="1"/>
<text x="229.49" y="426.90" font-size="5.6" fill="#959aa2" text-anchor="middle" dominant-baseline="central">Ott</text>
<line x1="250.01" y1="420.50" x2="250.01" y2="423.50" stroke="#999da5" stroke-width="1"/>
<text x="250.01" y="426.90" font-size="5.6" fill="#959aa2" text-anchor="middle" dominant-baseline="central">Nov</text>
<line x1="270.54" y1="420.50" x2="270.54" y2="423.50" stroke="#999da5" stroke-width="1"/>
<text x="270.54" y="426.90" font-size="5.6" fill="#959aa2" text-anchor="middle" dominant-baseline="central">Dic</text>
<path d="M44.76,300.56 C51.60,300.56 58.45,300.56 65.29,300.56 C72.13,300.56 78.97,300.56 85.81,300.56 C92.65,300.56 99.50,300.56 106.34,300.56 C113.18,300.56 120.02,300.56 126.86,300.56 C133.70,300.56 140.55,300.56 147.39,300.56 C154.23,300.56 161.07,300.56 167.91,300.56 C174.75,300.56 181.60,300.56 188.44,300.56 C195.28,300.56 202.12,300.56 208.96,300.56 C215.80,300.56 222.65,300.56 229.49,300.56 C236.33,300.56 243.17,300.56 250.01,300.56 C256.85,300.56 263.70,300.56 270.54,300.56" fill="none" stroke="#ff4314" stroke-width="2"/>
<path d="M44.76,357.35 C51.60,357.35 58.45,357.35 65.29,357.35 C72.13,357.35 78.97,357.35 85.81,357.35 C92.65,357.35 99.50,378.49 106.34,378.49 C113.18,378.49 120.02,378.49 126.86,378.49 C133.70,378.49 140.55,384.38 147.39,384.38 C154.23,384.38 161.07,384.38 167.91,384.38 C174.75,384.38 181.60,384.38 188.44,384.38 C195.28,384.38 202.12,378.49 208.96,378.49 C215.80,378.49 222.65,378.49 229.49,378.49 C236.33,378.49 243.17,357.35 250.01,357.35 C256.85,357.35 263.70,361.86 270.54,366.38" fill="none" stroke="#2e9565" stroke-width="2"/>
<circle cx="44.76" cy="300.56" r="2.4" fill="#ff4314" stroke="#fff" stroke-width="1.2"/>
<circle cx="65.29" cy="300.56" r="2.4" fill="#ff4314" stroke="#fff" stroke-width="1.2"/>
<circle cx="85.81" cy="300.56" r="2.4" fill="#ff4314" stroke="#fff" stroke-width="1.2"/>
<circle cx="106.34" cy="300.56" r="2.4" fill="#ff4314" stroke="#fff" stroke-width="1.2"/>
<circle cx="126.86" cy="300.56" r="2.4" fill="#ff4314" stroke="#fff" stroke-width="1.2"/>
<circle cx="147.39" cy="300.56" r="2.4" fill="#ff4314" stroke="#fff" stroke-width="1.2"/>
<circle cx="167.91" cy="300.56" r="2.4" fill="#ff4314" stroke="#fff" stroke-width="1.2"/>
<circle cx="188.44" cy="300.56" r="2.4" fill="#ff4314" stroke="#fff" stroke-width="1.2"/>
<circle cx="208.96" cy="300.56" r="2.4" fill="#ff4314" stroke="#fff" stroke-width="1.2"/>
<circle cx="229.49" cy="300.56" r="2.4" fill="#ff4314" stroke="#fff" stroke-width="1.2"/>
<circle cx="250.01" cy="300.56" r="2.4" fill="#ff4314" stroke="#fff" stroke-width="1.2"/>
<circle cx="270.54" cy="300.56" r="2.4" fill="#ff4314" stroke="#fff" stroke-width="1.2"/>
<circle cx="44.76" cy="357.35" r="2.4" fill="#2e9565" stroke="#fff" stroke-width="1.2"/>
<circle cx="65.29" cy="357.35" r="2.4" fill="#2e9565" stroke="#fff" stroke-width="1.2"/>
<circle cx="85.81" cy="357.35" r="2.4" fill="#2e9565" stroke="#fff" stroke-width="1.2"/>
<circle cx="106.34" cy="378.49" r="2.4" fill="#2e9565" stroke="#fff" stroke-width="1.2"/>
<circle cx="126.86" cy="378.49" r="2.4" fill="#2e9565" stroke="#fff" stroke-width="1.2"/>
<circle cx="147.39" cy="384.38" r="2.4" fill="#2e9565" stroke="#fff" stroke-width="1.2"/>
<circle cx="167.91" cy="384.38" r="2.4" fill="#2e9565" stroke="#fff" stroke-width="1.2"/>
<circle cx="188.44" cy="384.38" r="2.4" fill="#2e9565" stroke="#fff" stroke-width="1.2"/>
<circle cx="208.96" cy="378.49" r="2.4" fill="#2e9565" stroke="#fff" stroke-width="1.2"/>
<circle cx="229.49" cy="378.49" r="2.4" fill="#2e9565" stroke="#fff" stroke-width="1.2"/>
<circle cx="250.01" cy="357.35" r="2.4" fill="#2e9565" stroke="#fff" stroke-width="1.2"/>
<circle cx="270.54" cy="366.38" r="2.4" fill="#2e9565" stroke="#fff" stroke-width="1.2"/>
</svg>
<div class="abs" style="left:21.3px;top:442.3px;width:7.5px;height:5.5px;background:#7b849b"></div>
<div class="abs" style="left:31.40px;top:438px;font-size:8.55px;line-height:12px;color:#3c3f44;white-space:nowrap;">Prelevato dalla rete</div>
<div class="abs" style="left:111.5px;top:442.3px;width:7.5px;height:5.5px;background:#ff4314"></div>
<div class="abs" style="left:121.30px;top:438px;font-size:8.55px;line-height:12px;color:#3c3f44;white-space:nowrap;">Ceduto in rete</div>
<div class="abs" style="left:182.3px;top:441.5px"><svg width="8" height="6" viewBox="0 0 8 6"><line x1="0" y1="3" x2="8" y2="3" stroke="#2e9565" stroke-width="0.9"/><circle cx="4" cy="3" r="1.45" fill="#fff" stroke="#2e9565" stroke-width="0.9"/></svg></div>
<div class="abs" style="left:192.70px;top:438px;font-size:8.55px;line-height:12px;color:#3c3f44;white-space:nowrap;">Produzione CHP</div>
<div class="abs" style="left:111px;top:454.7px"><svg width="8" height="6" viewBox="0 0 8 6"><line x1="0" y1="3" x2="8" y2="3" stroke="#ff4314" stroke-width="0.9"/><circle cx="4" cy="3" r="1.45" fill="#fff" stroke="#ff4314" stroke-width="0.9"/></svg></div>
<div class="abs" style="left:120.80px;top:451px;font-size:8.55px;line-height:12px;color:#3c3f44;white-space:nowrap;">Fabbisogno</div>
<div class="abs" style="left:350.6px;top:442.3px;width:7.5px;height:5.5px;background:#2d9bd8"></div>
<div class="abs" style="left:360.20px;top:438px;font-size:8.55px;line-height:12px;color:#3c3f44;white-space:nowrap;">Integrazione caldaia</div>
<div class="abs" style="left:443.8px;top:442.3px;width:7.5px;height:5.5px;background:#ff4314"></div>
<div class="abs" style="left:453.90px;top:438px;font-size:8.55px;line-height:12px;color:#3c3f44;white-space:nowrap;">Dissipato</div>
<div class="abs" style="left:495px;top:441.5px"><svg width="8" height="6" viewBox="0 0 8 6"><line x1="0" y1="3" x2="8" y2="3" stroke="#2e9565" stroke-width="0.9"/><circle cx="4" cy="3" r="1.45" fill="#fff" stroke="#2e9565" stroke-width="0.9"/></svg></div>
<div class="abs" style="left:505.00px;top:438px;font-size:8.55px;line-height:12px;color:#3c3f44;white-space:nowrap;">Produzione CHP</div>
<div class="abs" style="left:431.5px;top:454.7px"><svg width="8" height="6" viewBox="0 0 8 6"><line x1="0" y1="3" x2="8" y2="3" stroke="#ff4314" stroke-width="0.9"/><circle cx="4" cy="3" r="1.45" fill="#fff" stroke="#ff4314" stroke-width="0.9"/></svg></div>
<div class="abs" style="left:442.00px;top:451px;font-size:8.55px;line-height:12px;color:#3c3f44;white-space:nowrap;">Fabbisogno</div>
</body></html>
